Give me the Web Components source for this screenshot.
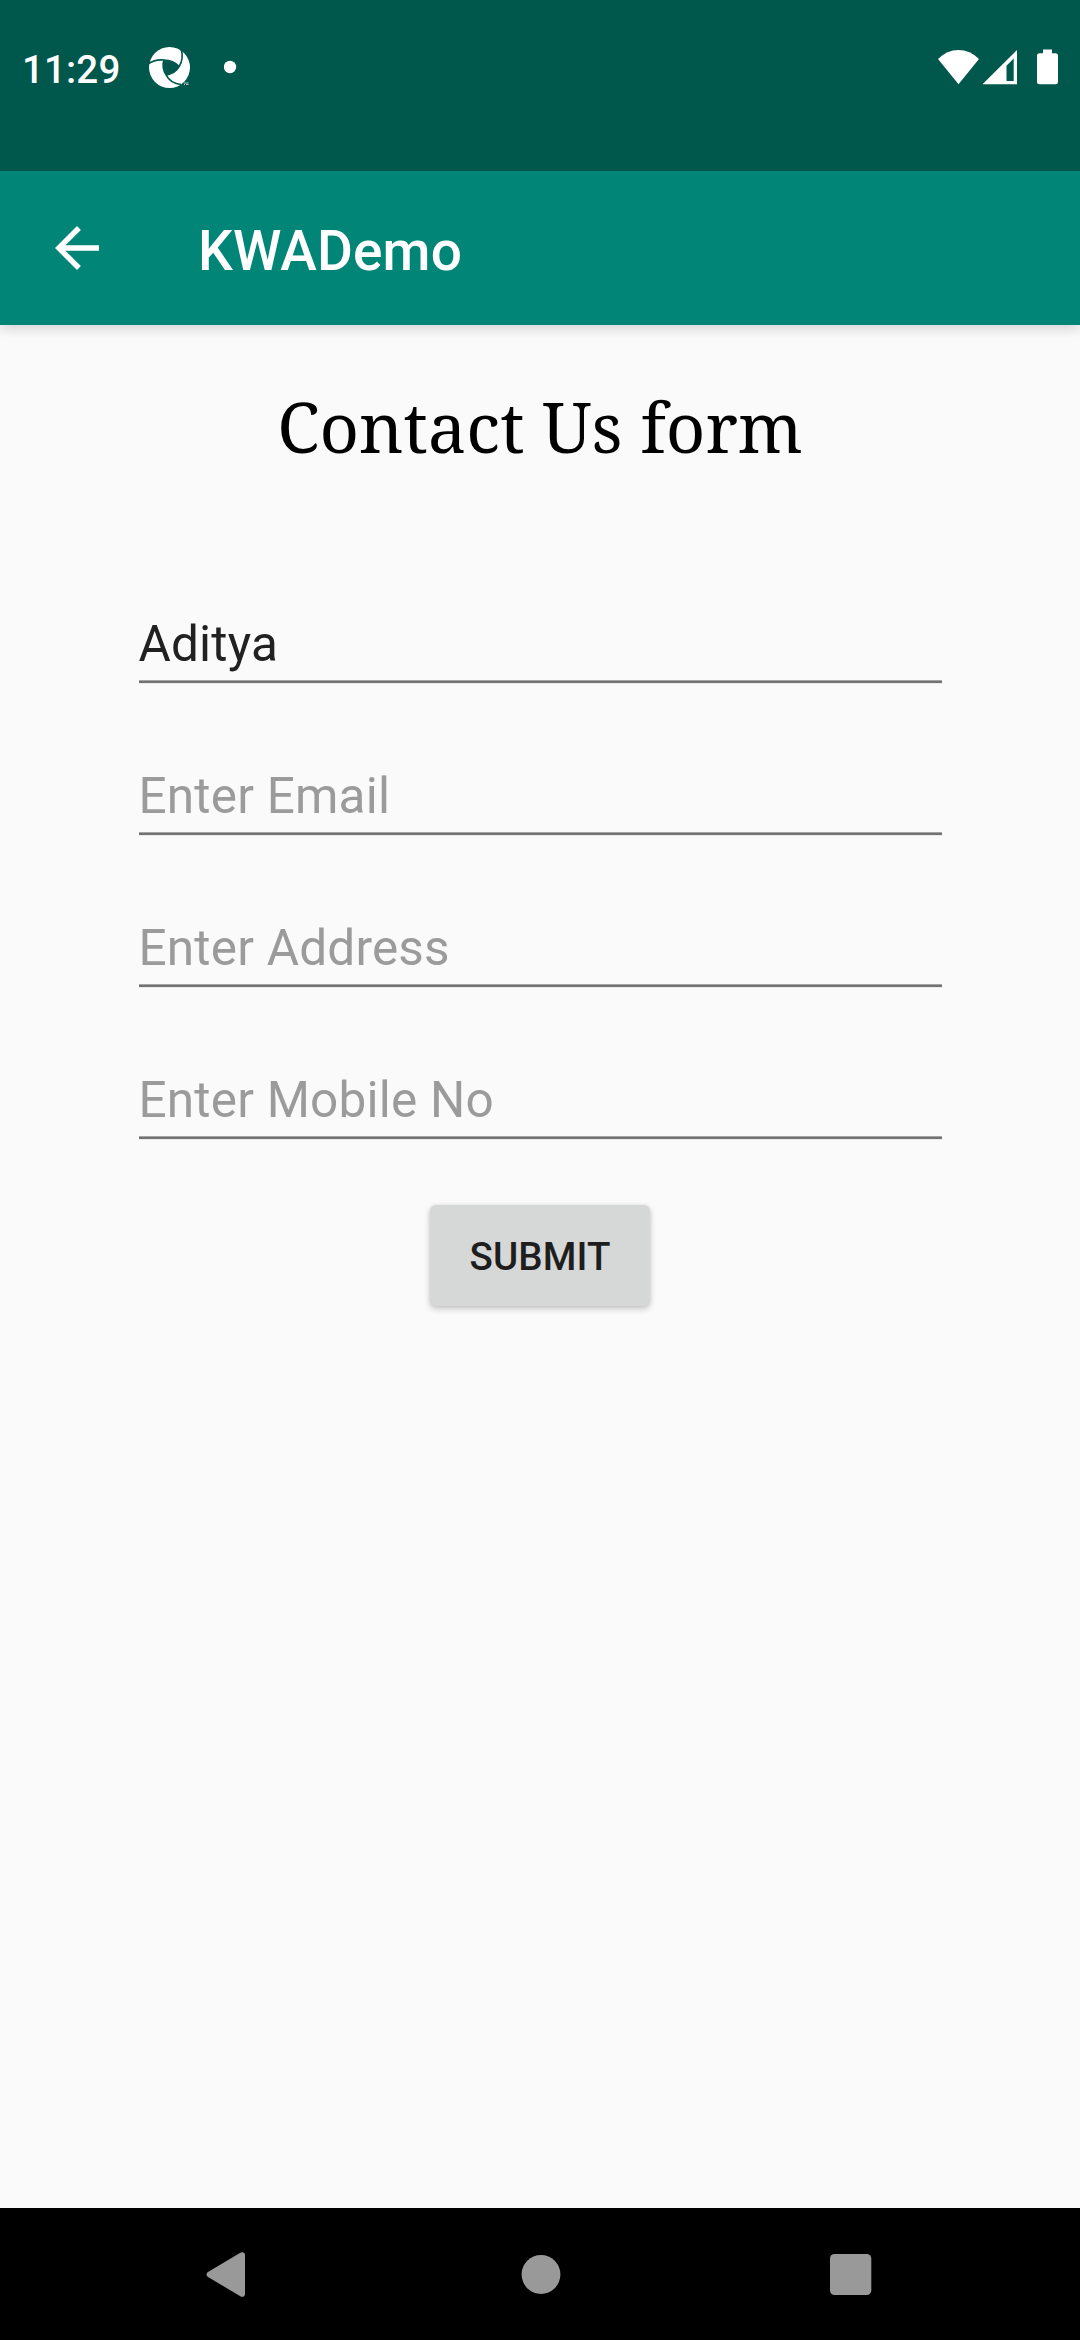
<!DOCTYPE html>
<html lang="en">
<head>
<meta charset="utf-8">
<title>KWADemo</title>
<style>
html,body{margin:0;padding:0;background:#fafafa}
body{font-family:Roboto,"Liberation Sans",sans-serif}
</style>
</head>
<body>
<kwa-screen>
  <status-bar slot="top">11:29</status-bar>
  <app-bar slot="top">KWADemo</app-bar>
  <form-heading>Contact Us form</form-heading>
  <text-field filled>Aditya</text-field>
  <text-field>Enter Email</text-field>
  <text-field>Enter Address</text-field>
  <text-field>Enter Mobile No</text-field>
  <raised-button>SUBMIT</raised-button>
  <nav-bar slot="bottom"></nav-bar>
</kwa-screen>
<script>
const define = (name, html) => customElements.define(name, class extends HTMLElement {
  constructor() {
    super();
    this.attachShadow({ mode: 'open' }).innerHTML = html;
  }
});

define('kwa-screen', `<style>
:host{display:flex;flex-direction:column;width:1080px;height:2340px;background:#fafafa;overflow:hidden}
main{flex:1;display:flex;flex-direction:column;align-items:center}
</style><slot name="top"></slot><main><slot></slot></main><slot name="bottom"></slot>`);

define('status-bar', `<style>
:host{display:block;height:171px;background:#00574b;color:#fff;position:relative;z-index:2}
.row{display:flex;align-items:center;height:68px;padding:33px 20px 0 22px}
.time{width:98px;font-size:38.5px;font-weight:500;line-height:46px;margin-top:5px;letter-spacing:.15px}
svg{display:block;flex:none}
.grow{flex:1}
.app{margin:1px 0 0 28px}.dot{margin-left:32px}
</style><div class="row">
<span class="time"><slot></slot></span>
<svg class="app" width="44" height="44" viewBox="0 -.5 44 44">
<circle cx="21.5" cy="21" r="20.5" fill="#fff"/>
<path d="M15.7 13.8Q24.5 13.2 31.2 20Q26.5 27.4 18.2 28.6Q14 21 15.7 13.8Z" fill="#00574b"/>
<g fill="none" stroke="#00574b" stroke-width="1.6">
<path d="M0 17.5Q7 12.5 15.8 13.5Q25 13.4 31.2 20"/>
<path d="M33.2 3Q36 12 31.2 20Q27.5 27 18.2 28.6"/>
<path d="M15.8 13.5Q13.6 22 18.2 28.6Q22.5 37 33 38"/>
</g>
<path d="M36 36.5h4.5M36 38h1M38 38h2.5" stroke="#d9e6e4" stroke-width=".8"/>
</svg>
<svg class="dot" width="14" height="14"><circle cx="6" cy="7" r="6.2" fill="#fff"/></svg>
<span class="grow"></span>
<svg width="122" height="36" viewBox="0 0 122 36" fill="#fff">
<path d="M0 10Q9 1 20.5 1T41 10L20.5 35.3Z"/>
<path fill-rule="evenodd" d="M44.5 35.3L79 1V35.3ZM68.5 16.7V32H75.7V9.5Z"/>
<path d="M105 .5h9v3.7h3.5a2.5 2.5 0 0 1 2.500 2.500v26.100a2.500 2.500 0 0 1-2.500 2.500h-16a2.500 2.500 0 0 1-2.500-2.500V6.700a2.500 2.500 0 0 1 2.500-2.500h3.500z"/>
</svg></div>`);

define('app-bar', `<style>
:host{display:flex;align-items:center;height:154px;box-sizing:border-box;padding-left:44px;background:#008577;color:#fff;box-shadow:0 3px 13px rgba(0,0,0,.17);position:relative}
svg{flex:none}
h1{margin:6px 0 0 88px;font-size:55px;font-weight:500;line-height:64px;letter-spacing:.15px}
</style><svg width="66" height="66" viewBox="0 0 24 24"><path fill="#fff" d="M20 11H7.83l5.59-5.59L12 4l-8 8 8 8 1.41-1.41L7.83 13H20v-2z"/></svg><h1><slot></slot></h1>`);

define('form-heading', `<style>
:host{display:block;height:207px;box-sizing:border-box;padding-top:55px;font:68.75px/94px "Noto Serif","Droid Serif",serif;color:#000;white-space:nowrap}
</style><slot></slot>`);

define('text-field', `<style>
:host{display:flex;flex-direction:column;justify-content:flex-end;width:803px;height:152px;color:#9b9b9b;font-size:49.5px;line-height:58px;letter-spacing:.2px}
:host([filled]){color:#212121}
.rule{margin-top:7px;height:4px;background:linear-gradient(#a3a3a3 1px,#737373 1px 3px,#e8e8e8 3px)}
</style><span><slot></slot></span><div class="rule"></div>`);

define('raised-button', `<style>
:host{display:block;margin-top:65px}
button{display:flex;align-items:center;justify-content:center;width:220px;height:101px;padding:2px 0 0;border:0;border-radius:6px;background:#d6d7d7;color:#1e1e1e;font:500 38.5px/46px Roboto,sans-serif;letter-spacing:.1px;box-shadow:0 3px 6px rgba(0,0,0,.2),0 0 4px rgba(0,0,0,.07)}
</style><button><slot></slot></button>`);

define('nav-bar', `<style>
:host{display:flex;justify-content:space-between;align-items:center;height:132px;box-sizing:border-box;padding:0 208px 0 205px;background:#000}
svg{display:block}
.home{margin-left:4px}
</style>
<svg width="42" height="46" viewBox="0 -.5 42 46"><path d="M35.3 1.3C37.5 0 40 .8 40 3.5V42.500C40 45.200 37.500 46 35.300 44.700L3 25.500C1 24.200 1 21.800 3 20.500Z" fill="#999"/></svg>
<svg class="home" width="40" height="40"><circle cx="20" cy="20.500" r="19.400" fill="#999"/></svg>
<svg width="42" height="42"><rect y="1" width="41.300" height="41" rx="4.500" fill="#999"/></svg>`);
</script>
</body>
</html>
